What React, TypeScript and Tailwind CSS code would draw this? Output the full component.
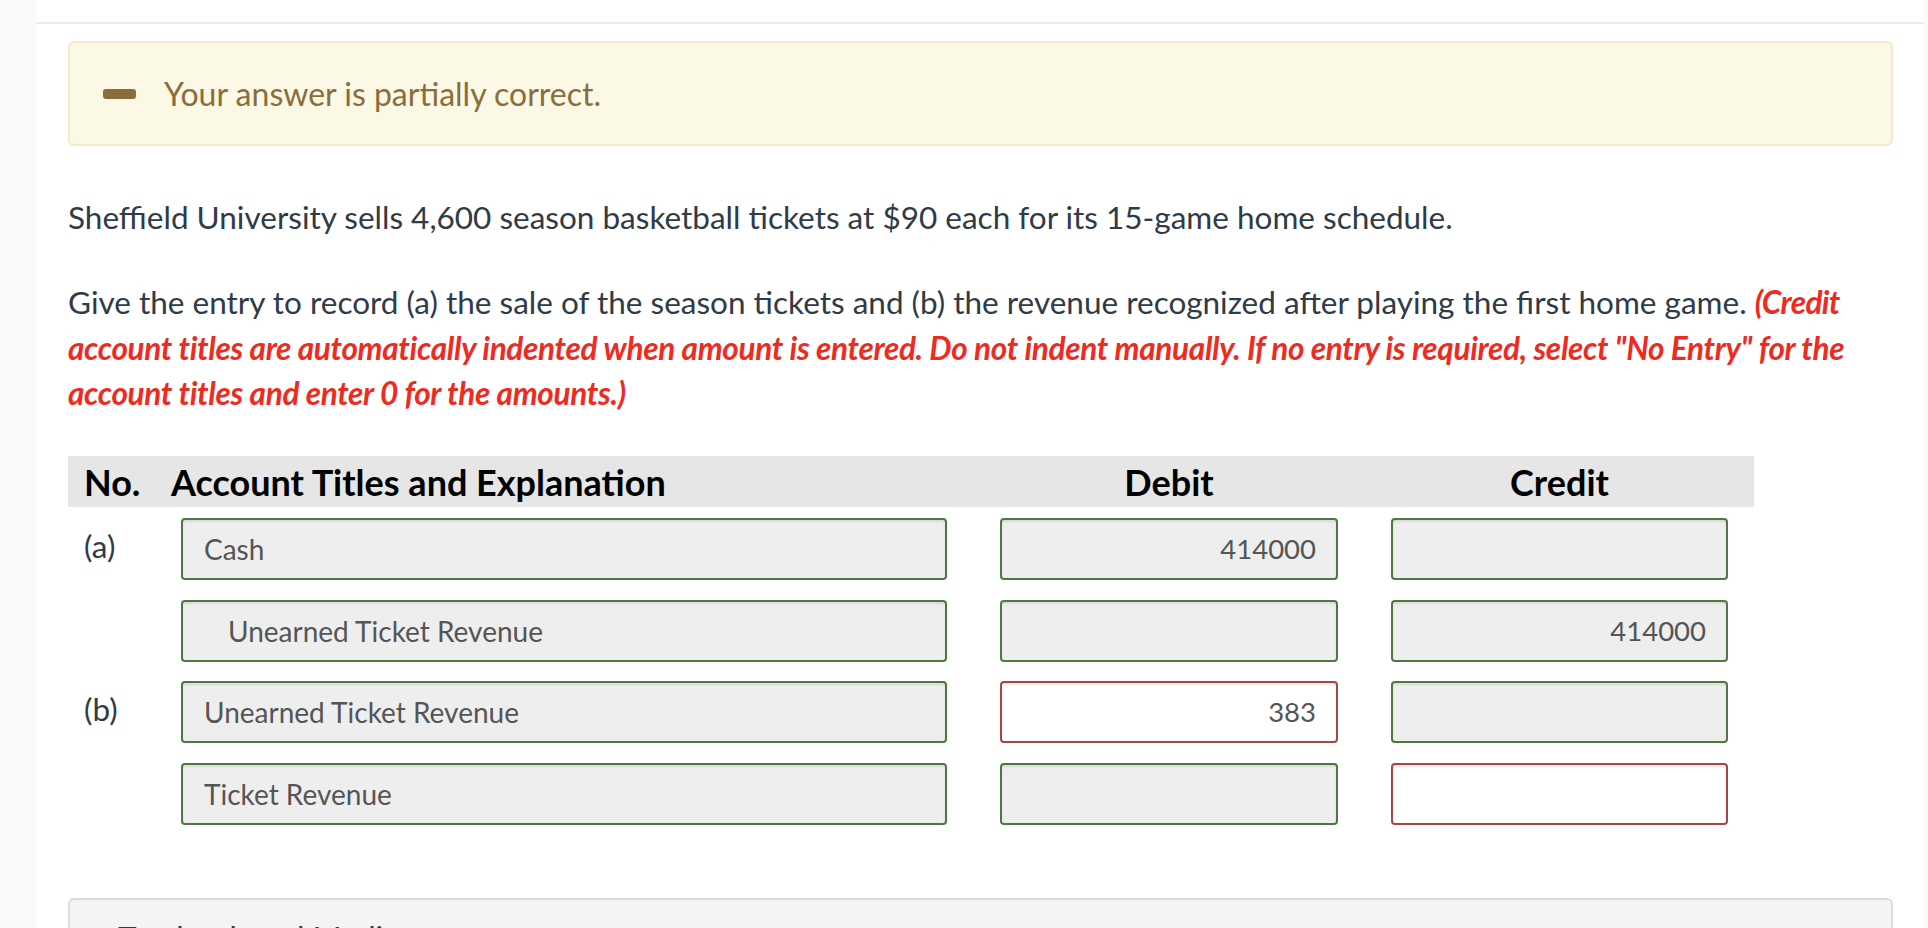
import React from 'react';

type Entry = {
  label?: string;
  account: string;
  indent?: boolean;
  debit: string;
  credit: string;
  debitBad?: boolean;
  creditBad?: boolean;
};

const entries: Entry[] = [
  { label: '(a)', account: 'Cash', debit: '414000', credit: '' },
  { account: 'Unearned Ticket Revenue', indent: true, debit: '', credit: '414000' },
  { label: '(b)', account: 'Unearned Ticket Revenue', debit: '383', credit: '', debitBad: true },
  { account: 'Ticket Revenue', debit: '', credit: '', creditBad: true },
];

const Field: React.FC<{ value: string; bad?: boolean; right?: boolean; indent?: boolean; width: string }> = ({
  value,
  bad,
  right,
  indent,
  width,
}) => (
  <div
    className={`${width} h-[62px] shrink-0 flex items-center rounded-[4px] border-2 shadow-[inset_0_2px_2px_rgba(0,0,0,0.08)] text-[#555555] ${
      bad ? 'border-[#a94442] bg-white' : 'border-[#4b7a3f] bg-[#eeeeee]'
    } ${right ? 'justify-end pr-[20px] text-[27.5px]' : indent ? 'pl-[45px] text-[28px]' : 'pl-[21px] text-[28px]'}`}
  >
    {value}
  </div>
);

export default function App() {
  return (
    <div
      className="w-[1928px] h-[928px] overflow-hidden flex items-start bg-[#f9f9f9]"
      style={{ fontFamily: 'Lato, "Noto Sans", sans-serif' }}
    >
      <div className="w-[36px] shrink-0" />
      <div className="w-[1888px] h-[928px] shrink-0 bg-white overflow-hidden">
        {/* top separator */}
        <div className="h-[22px]" />
        <div className="h-[2px] bg-[#ebebeb]" />

        <div className="pl-[32px] pr-[31px] pt-[17px]">
          {/* feedback alert */}
          <div className="h-[105px] flex items-center rounded-[6px] border-2 border-[#f6e9c8] bg-[#fbf8e6] text-[#8a6d3b]">
            <div className="ml-[33px] w-[33px] h-[10px] rounded-[3px] bg-[#8a6d3b]" />
            <span className="ml-[28px] text-[32px]">Your answer is partially correct.</span>
          </div>

          {/* question text */}
          <p className="mt-[49px] text-[31.5px] leading-[45px] text-[#2f3b46] whitespace-nowrap">
            Sheffield University sells 4,600 season basketball tickets at $90 each for its 15-game home schedule.
          </p>
          <p className="mt-[40px] text-[31.5px] leading-[45.5px] text-[#2f3b46] whitespace-nowrap">
            Give the entry to record (a) the sale of the season tickets and (b) the revenue recognized after playing the first home game.{' '}
            <span className="font-bold italic text-[#ee2b20] tracking-[-0.02em]">(Credit</span>
            <br />
            <span className="font-bold italic text-[#ee2b20] tracking-[-0.01em]">
              account titles are automatically indented when amount is entered. Do not indent manually. If no entry is required, select "No Entry" for the
            </span>
            <br />
            <span className="font-bold italic text-[#ee2b20] tracking-[-0.01em]">account titles and enter 0 for the amounts.)</span>
          </p>

          {/* journal table */}
          <div className="mt-[39.5px] w-[1686px]">
            <div className="h-[51px] flex items-center bg-[#e6e6e6] text-[36px] font-bold text-black">
              <div className="w-[103px] shrink-0 pl-[16px]">No.</div>
              <div className="w-[766px] shrink-0 whitespace-nowrap">Account Titles and Explanation</div>
              <div className="ml-[63px] w-[338px] shrink-0 text-center">Debit</div>
              <div className="ml-[53px] w-[337px] shrink-0 text-center">Credit</div>
            </div>
            <div className="pt-[11px] flex flex-col gap-[19.5px]">
              {entries.map((e, i) => (
                <div key={i} className="flex items-center">
                  <div className="w-[113px] shrink-0 pl-[16px] pb-[4px] text-[31.5px] text-[#2f3b46]">{e.label}</div>
                  <Field width="w-[766px]" value={e.account} indent={e.indent} />
                  <div className="w-[53px] shrink-0" />
                  <Field width="w-[338px]" value={e.debit} right bad={e.debitBad} />
                  <div className="w-[53px] shrink-0" />
                  <Field width="w-[337px]" value={e.credit} right bad={e.creditBad} />
                </div>
              ))}
            </div>
          </div>

          {/* textbook and media panel */}
          <div className="mt-[73.5px] h-[80px] rounded-t-[6px] border-2 border-[#dcdcdc] bg-[#f4f4f4] pl-[48px] pt-[17px]">
            <span className="text-[31.5px] leading-[40px] text-[#2f3b46]">Textbook and Media</span>
          </div>
        </div>
      </div>
      <div className="w-[4px] shrink-0" />
    </div>
  );
}
